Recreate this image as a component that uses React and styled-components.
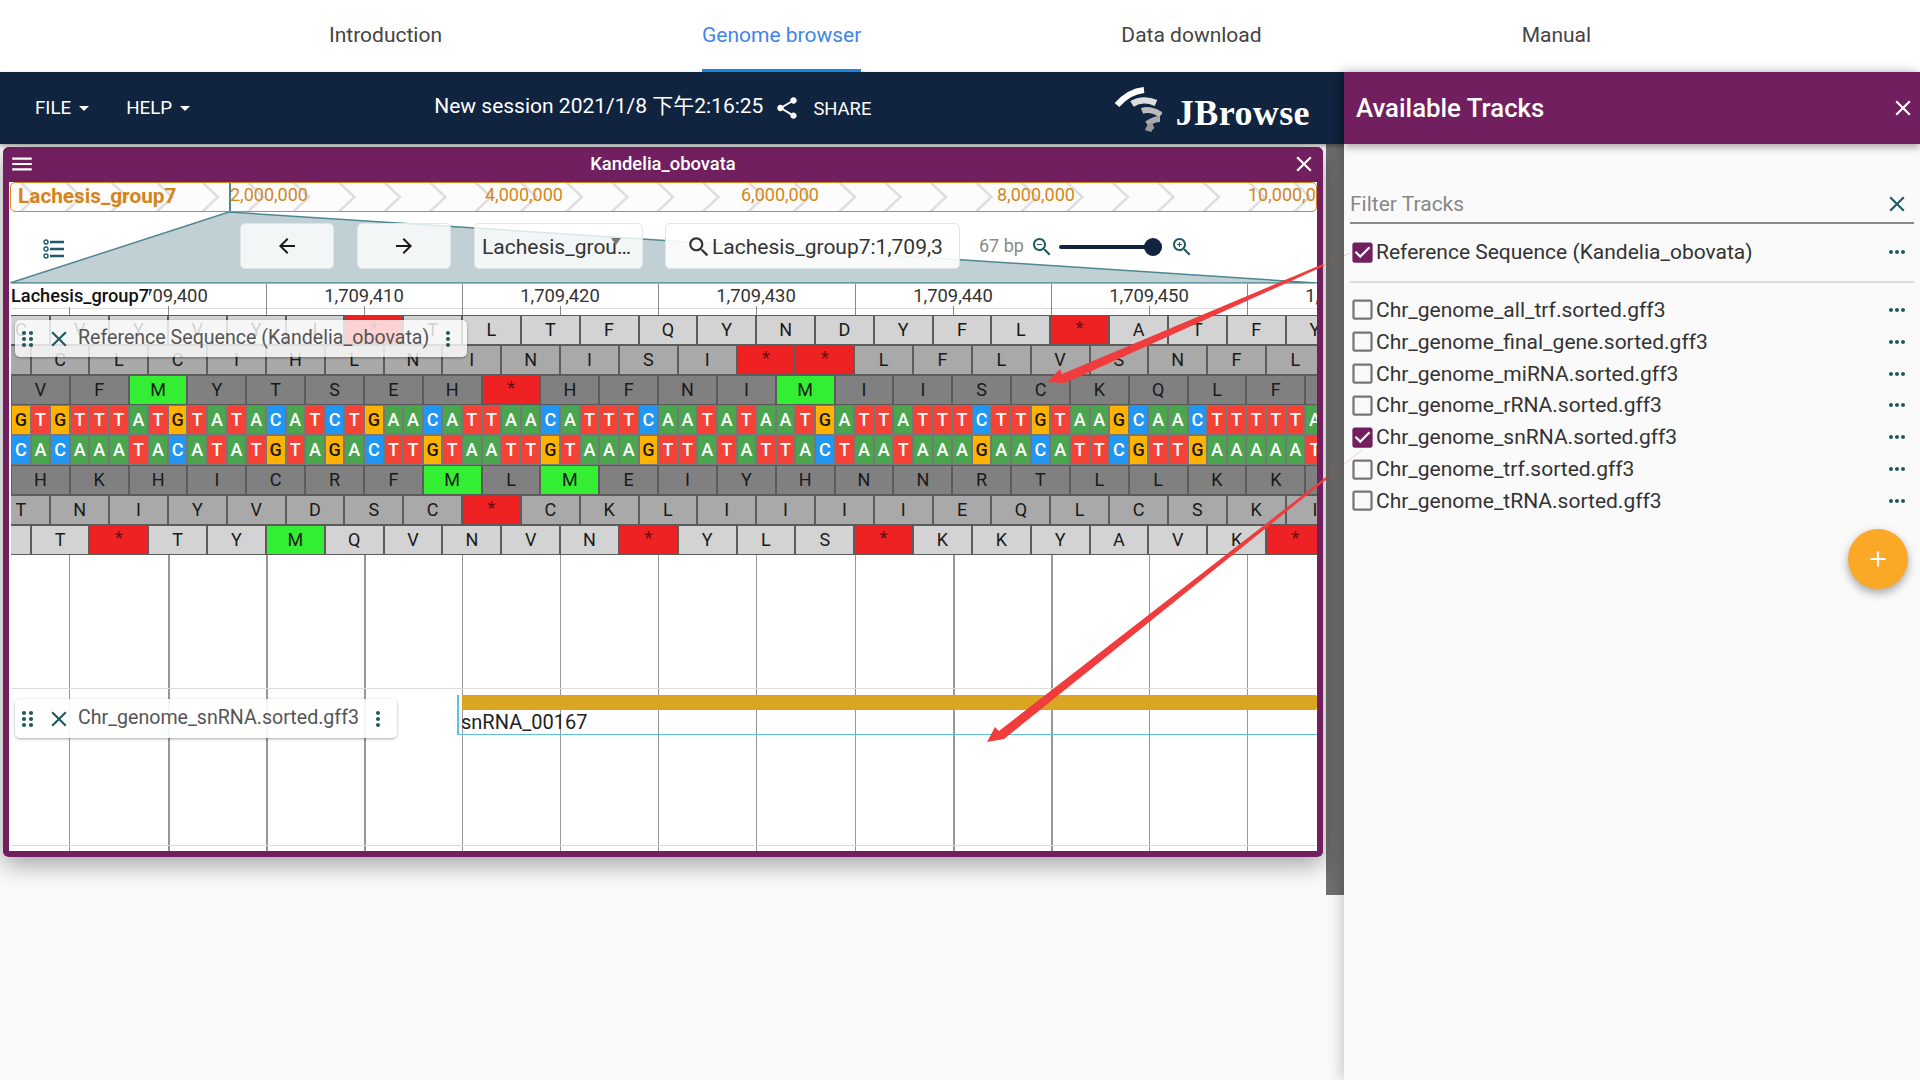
import React from "react";
import styled, { createGlobalStyle } from "styled-components";

const BASE = 19.61;
const TOP_STRAND =
  "GTGTTTATGTATACATCTGAACATTAACATTTCAATATAATGATTATTTCTTGTAAGCAACTTTTTA";
const BOTTOM_STRAND =
  "CACAAATACATATGTAGACTTGTAATTGTAAAGTTATATTACTAATAAAGAACATTCGTTGAAAAAT";

// shift = how many bases of the frame are visible before the 2nd codon
const FRAMES = [
  { shift: 2, tone: "#d3d3d3", aa: "CVYVYI*TLTFQYNDYFL*ATFY" },
  { shift: 1, tone: "#a9a9a9", aa: " CLCIHLNINISI**LFLVSNFL" },
  { shift: 0, tone: "#808080", aa: "VFMYTSEH*HFNIMIISCKQLFY" },
  { dna: TOP_STRAND },
  { dna: BOTTOM_STRAND },
  { shift: 0, tone: "#808080", aa: "HKHICRFMLMEIYHNNRTLLKKK" },
  { shift: 2, tone: "#a9a9a9", aa: "TNIYVDSC*CKLIIIIEQLCSKI" },
  { shift: 1, tone: "#d3d3d3", aa: " T*TYMQVNVN*YLS*KKYAVK*" },
];

const BASE_COLORS = { A: "#4aa54e", T: "#f44336", C: "#2196f3", G: "#ffb300" };

const GRID_LINES = [
  [69, 1], [168, 2], [266, 2], [364, 2], [462, 1], [560, 1], [658, 1],
  [756, 1], [855, 1], [953, 2], [1051, 2], [1149, 1], [1247, 1],
];
const RULER_LABELS = [
  [168, "1,709,400"], [364, "1,709,410"], [560, "1,709,420"], [756, "1,709,430"],
  [953, "1,709,440"], [1149, "1,709,450"], [1345, "1,709,460"],
];
const OVERVIEW_LABELS = [
  [229, "2,000,000"], [484, "4,000,000"], [740, "6,000,000"], [996, "8,000,000"], [1247, "10,000,000"],
];
const TRACKS = [
  ["Chr_genome_all_trf.sorted.gff3", false],
  ["Chr_genome_final_gene.sorted.gff3", false],
  ["Chr_genome_miRNA.sorted.gff3", false],
  ["Chr_genome_rRNA.sorted.gff3", false],
  ["Chr_genome_snRNA.sorted.gff3", true],
  ["Chr_genome_trf.sorted.gff3", false],
  ["Chr_genome_tRNA.sorted.gff3", false],
];

const PATHS = {
  close: "M19 6.41L17.59 5 12 10.59 6.41 5 5 6.41 10.59 12 5 17.59 6.41 19 12 13.41 17.59 19 19 17.59 13.41 12z",
  back: "M20 11H7.83l5.59-5.59L12 4l-8 8 8 8 1.41-1.41L7.83 13H20v-2z",
  forward: "M12 4l-1.41 1.41L16.17 11H4v2h12.17l-5.58 5.59L12 20l8-8z",
  vert: "M12 8c1.1 0 2-.9 2-2s-.9-2-2-2-2 .9-2 2 .9 2 2 2zm0 2c-1.1 0-2 .9-2 2s.9 2 2 2 2-.9 2-2-.9-2-2-2zm0 6c-1.1 0-2 .9-2 2s.9 2 2 2 2-.9 2-2-.9-2-2-2z",
  horiz: "M6 10c-1.1 0-2 .9-2 2s.9 2 2 2 2-.9 2-2-.9-2-2-2zm12 0c-1.1 0-2 .9-2 2s.9 2 2 2 2-.9 2-2-.9-2-2-2zm-6 0c-1.1 0-2 .9-2 2s.9 2 2 2 2-.9 2-2-.9-2-2-2z",
  menu: "M3 18h18v-2H3v2zm0-5h18v-2H3v2zm0-7v2h18V6H3z",
  share: "M18 16.08c-.76 0-1.44.3-1.96.77L8.91 12.7c.05-.23.09-.46.09-.7s-.04-.47-.09-.7l7.05-4.11c.54.5 1.25.81 2.04.81 1.66 0 3-1.34 3-3s-1.34-3-3-3-3 1.34-3 3c0 .24.04.47.09.7L8.04 9.81C7.5 9.31 6.79 9 6 9c-1.66 0-3 1.34-3 3s1.34 3 3 3c.79 0 1.5-.31 2.04-.81l7.12 4.16c-.05.21-.08.43-.08.65 0 1.61 1.31 2.92 2.92 2.92s2.92-1.31 2.92-2.92c0-1.61-1.31-2.92-2.92-2.92z",
  search: "M15.5 14h-.79l-.28-.27C15.41 12.59 16 11.11 16 9.5 16 5.91 13.09 3 9.5 3S3 5.91 3 9.5 5.91 16 9.5 16c1.61 0 3.09-.59 4.23-1.57l.27.28v.79l5 4.99L20.49 19l-4.99-5zm-6 0C7.01 14 5 11.99 5 9.5S7.01 5 9.5 5 14 7.01 14 9.5 11.99 14 9.5 14z",
  zoomIn: "M15.5 14h-.79l-.28-.27C15.41 12.59 16 11.11 16 9.5 16 5.91 13.09 3 9.5 3S3 5.91 3 9.5 5.91 16 9.5 16c1.61 0 3.09-.59 4.23-1.57l.27.28v.79l5 4.99L20.49 19l-4.99-5zm-6 0C7.01 14 5 11.99 5 9.5S7.01 5 9.5 5 14 7.01 14 9.5 11.99 14 9.5 14zM12 10h-2v2H9v-2H7V9h2V7h1v2h2v1z",
  zoomOut: "M15.5 14h-.79l-.28-.27C15.41 12.59 16 11.11 16 9.5 16 5.91 13.09 3 9.5 3S3 5.91 3 9.5 5.91 16 9.5 16c1.61 0 3.09-.59 4.23-1.57l.27.28v.79l5 4.99L20.49 19l-4.99-5zm-6 0C7.01 14 5 11.99 5 9.5S7.01 5 9.5 5 14 7.01 14 9.5 11.99 14 9.5 14zM7 9h5v1H7z",
  checked: "M19 3H5c-1.11 0-2 .9-2 2v14c0 1.1.89 2 2 2h14c1.11 0 2-.9 2-2V5c0-1.1-.89-2-2-2zm-9 14l-5-5 1.41-1.41L10 14.17l7.59-7.59L19 8l-9 9z",
  unchecked: "M19 5v14H5V5h14m0-2H5c-1.1 0-2 .9-2 2v14c0 1.1.9 2 2 2h14c1.1 0 2-.9 2-2V5c0-1.1-.9-2-2-2z",
  add: "M19 13h-6v6h-2v-6H5v-2h6V5h2v6h6v2z",
  drop: "M7 10l5 5 5-5z",
};

const GlobalStyle = createGlobalStyle`
  html, body {
    margin: 0;
    padding: 0;
    background: #fafafa;
  }
  body {
    font-family: Roboto, "Noto Sans CJK SC", sans-serif;
    overflow: hidden;
  }
  * {
    box-sizing: border-box;
  }
`;

const Page = styled.div`
  position: relative;
  width: 1920px;
  height: 1080px;
  overflow: hidden;
  background: #fafafa;
`;

const TopNav = styled.nav`
  display: flex;
  gap: 260px;
  height: 72px;
  padding-left: 329px;
  background: #fff;
`;
const NavTab = styled.a`
  display: flex;
  align-items: center;
  height: 72px;
  font-size: 21px;
  color: ${p => (p.$active ? "#4285e8" : "#444")};
  border-bottom: 3px solid ${p => (p.$active ? "#1e88e5" : "transparent")};
`;

const Main = styled.div`
  display: flex;
  height: 1008px;
`;
const LeftColumn = styled.div`
  flex: 0 0 1344px;
  display: flex;
  flex-direction: column;
`;
const AppBar = styled.header`
  display: flex;
  align-items: center;
  flex: 0 0 72px;
  padding-left: 35px;
  background: #10233f;
  color: #fff;
  box-shadow: 0 2px 4px rgba(0, 0, 0, 0.35);
  position: relative;
  z-index: 2;
`;
const MenuButton = styled.div`
  display: flex;
  align-items: center;
  margin-right: 30px;
  font-size: 18.75px;
  text-transform: uppercase;
  svg {
    margin-left: 1px;
  }
`;
const SessionName = styled.div`
  margin-left: 207px;
  margin-top: -8px;
  font-size: 21px;
  white-space: nowrap;
`;
const ShareButton = styled.div`
  display: flex;
  align-items: center;
  gap: 13px;
  margin-left: 11px;
  font-size: 18.4px;
`;
const Logo = styled.div`
  display: flex;
  align-items: center;
  margin-left: auto;
  margin-right: 34px;
  gap: 14px;
`;
const LogoText = styled.span`
  font-family: "Liberation Serif", serif;
  font-weight: 700;
  font-size: 36px;
  letter-spacing: 0.4px;
  line-height: 40px;
  margin-top: 10px;
  color: #fff;
`;
const LogoMark = styled.svg`
  margin-top: 5px;
`;

const Workspace = styled.div`
  display: flex;
  justify-content: space-between;
  flex: 1;
`;
const ScrollTrack = styled.div`
  width: 18px;
  height: 751px;
  background: #6f6f6f;
`;

const ViewWindow = styled.section`
  position: relative;
  display: flex;
  flex-direction: column;
  width: 1320px;
  height: 710px;
  margin: 3px 0 0 3px;
  border: 6px solid #711f5f;
  border-top: none;
  border-radius: 6px;
  background: #fff;
  box-shadow: 0 8px 24px rgba(0, 0, 0, 0.35);
`;
const WindowHeader = styled.div`
  display: flex;
  align-items: center;
  justify-content: space-between;
  flex: 0 0 35px;
  margin: 0 -6px;
  padding: 0 6px 2px 6px;
  background: #711f5f;
  border-radius: 6px 6px 0 0;
  color: #fff;
`;
const WindowTitle = styled.div`
  font-size: 18.4px;
  font-weight: 500;
`;

const Overview = styled.div`
  position: relative;
  flex: 0 0 30px;
  margin-left: 1px;
  border: 1px solid #d4861c;
  border-radius: 5px;
  background: #fcfcfc;
  overflow: hidden;
`;
const ChevronLayer = styled.svg`
  position: absolute;
  inset: 0;
`;
const OverviewLabel = styled.span`
  position: absolute;
  top: 1px;
  font-size: 18px;
  color: #d4861c;
  white-space: nowrap;
`;
const OverviewRef = styled.span`
  position: absolute;
  left: 7px;
  top: -1px;
  font-size: 20.8px;
  font-weight: 700;
  color: #d4861c;
  line-height: 28px;
`;
const OverviewCursor = styled.div`
  position: absolute;
  left: 218px;
  top: 0;
  bottom: 0;
  width: 2px;
  background: #4f8791;
`;

const ControlRow = styled.div`
  position: relative;
  display: flex;
  align-items: flex-start;
  flex: 0 0 71px;
  padding-top: 11px;
`;
const ZoomPolygon = styled.svg`
  position: absolute;
  left: 0;
  top: 0;
`;
const ListIcon = styled.svg`
  position: relative;
  margin: 16px 0 0 34px;
`;
const NavButton = styled.div`
  position: relative;
  display: flex;
  align-items: center;
  justify-content: center;
  flex: 0 0 94px;
  height: 46px;
  margin-left: ${p => p.$gap}px;
  background: rgba(255, 255, 255, 0.8);
  border: 1px solid #e0e4e6;
  border-radius: 5px;
  color: #1a1a1a;
`;
const SelectBox = styled(NavButton)`
  flex: 0 0 169px;
  justify-content: flex-start;
  padding: 1px 0 0 7px;
  font-size: 21px;
  color: #333;
  white-space: nowrap;
  overflow: hidden;
`;
const SelectCaret = styled.svg`
  position: absolute;
  right: 19px;
  top: 14px;
`;
const SearchBox = styled(NavButton)`
  flex: 0 0 295px;
  justify-content: flex-start;
  padding: 1px 0 0 20px;
  font-size: 21px;
  color: #333;
  background: rgba(255, 255, 255, 0.9);
  white-space: nowrap;
  overflow: hidden;
`;
const BpLabel = styled.span`
  position: relative;
  margin: 12px 0 0 19px;
  font-size: 18px;
  color: #8a8a8a;
`;
const ZoomIcon = styled.div`
  position: relative;
  display: flex;
  margin: 12px 0 0 ${p => p.$gap}px;
  color: #1f5a5f;
`;
const Slider = styled.div`
  position: relative;
  flex: 0 0 103px;
  height: 4px;
  margin: 22px 0 0 5px;
  background: #10233f;
  border-radius: 2px;
`;
const SliderThumb = styled.div`
  position: absolute;
  left: 85px;
  top: -7px;
  width: 18px;
  height: 18px;
  border-radius: 50%;
  background: #10233f;
`;

const Ruler = styled.div`
  position: relative;
  flex: 0 0 32px;
  margin-left: 2px;
  background: #fff;
  overflow: hidden;
  border-top: 1px solid #9fb4ba;
`;
const RulerRule = styled.div`
  position: absolute;
  left: 0;
  right: 0;
  top: 24px;
  height: 1px;
  background: #ddd;
`;
const RulerTick = styled.div`
  position: absolute;
  bottom: 0;
  width: 1px;
  height: ${p => (p.$major ? 32 : 9)}px;
  background: #888;
`;
const RulerNumber = styled.span`
  position: absolute;
  top: 1px;
  transform: translateX(-50%);
  font-size: 18.4px;
  line-height: 22px;
  color: #333;
  white-space: nowrap;
`;
const RefName = styled.span`
  position: absolute;
  left: 0;
  top: 1px;
  font-size: 18.2px;
  font-weight: 500;
  line-height: 22px;
  color: #111;
  background: #fff;
`;

const TrackArea = styled.div`
  position: relative;
  flex: 1;
  overflow: hidden;
`;
const GridLine = styled.div`
  position: absolute;
  top: 0;
  bottom: 0;
  width: ${p => p.$width}px;
  background: #979797;
`;
const TrackRule = styled.div`
  position: absolute;
  left: 2px;
  right: 0;
  top: ${p => p.$top}px;
  height: 1px;
  background: #ddd;
`;
const SequenceBlock = styled.div`
  position: relative;
  margin-left: 2px;
  height: 240px;
  overflow: hidden;
`;
const StrandRow = styled.div`
  display: flex;
  height: 30px;
  margin-left: ${p => p.$offset || 0}px;
`;
const Cell = styled.div`
  display: flex;
  align-items: center;
  justify-content: center;
  flex: 0 0 ${p => p.$width}px;
  height: 30px;
  border: 1px solid ${p => (p.$dna ? "#777" : "#5c5c5c")};
  font-size: 18px;
  line-height: 1;
  background: ${p => p.$bg};
  color: ${p => p.$fg || "#1a1a1a"};
  font-weight: ${p => p.$weight || 400};
`;
const Star = styled.span`
  font-size: 18px;
  color: #6d0c0c;
  transform: translateY(-2px);
`;

const TrackLabel = styled.div`
  position: absolute;
  left: 6px;
  top: ${p => p.$top}px;
  display: flex;
  align-items: center;
  height: ${p => p.$height}px;
  padding: 0 7px 0 1px;
  background: ${p => p.$bg};
  border-radius: 5px;
  box-shadow: 0 1px 3px rgba(0, 0, 0, 0.35);
  font-size: 19.6px;
  color: #555;
  white-space: nowrap;
  svg {
    flex: none;
  }
`;
const LabelClose = styled.div`
  display: flex;
  margin-left: 6px;
`;
const LabelText = styled.span`
  margin: -2px 7px 0 6px;
`;

const FeatureLane = styled.div`
  position: absolute;
  left: 448px;
  right: 0;
  top: 380px;
  height: 40px;
  border-left: 2px solid #5fc0e0;
  border-bottom: 1px solid #5fc0e0;
`;
const FeatureBar = styled.div`
  height: 15px;
  margin-left: 3px;
  background: #daa520;
  border-radius: 0 2px 2px 0;
`;
const FeatureName = styled.div`
  margin: 0 0 0 2px;
  font-size: 20px;
  line-height: 24px;
  color: #222;
`;

const Drawer = styled.aside`
  position: relative;
  flex: 0 0 576px;
  display: flex;
  flex-direction: column;
  background: #fafafa;
  box-shadow: -4px 0 12px rgba(0, 0, 0, 0.18);
  z-index: 3;
`;
const DrawerHeader = styled.div`
  display: flex;
  align-items: center;
  justify-content: space-between;
  flex: 0 0 72px;
  padding: 0 4px 0 12px;
  background: #711f5f;
  color: #fff;
  box-shadow: 0 3px 8px rgba(0, 0, 0, 0.35);
`;
const DrawerTitle = styled.h2`
  margin: 0;
  font-size: 25.8px;
  font-weight: 500;
`;
const DrawerBody = styled.div`
  position: relative;
  flex: 1;
  padding: 36px 6px 0 6px;
`;
const FilterField = styled.div`
  display: flex;
  align-items: center;
  justify-content: space-between;
  height: 44px;
  padding: 5px 4px 0 0;
  border-bottom: 2px solid #8a8a8a;
  font-size: 21px;
  color: #888;
`;
const TrackRow = styled.div`
  display: flex;
  align-items: center;
  height: ${p => p.$height || 31.85}px;
  font-size: 21px;
  color: #333;
  white-space: nowrap;
`;
const RefTrackRow = styled(TrackRow)`
  margin-bottom: -13px;
`;
const TrackName = styled.span`
  flex: 1;
`;
const CheckIcon = styled.svg`
  flex: none;
  margin-left: -1px;
  color: ${p => (p.$on ? "#711f5f" : "#777")};
`;
const MoreIcon = styled.svg`
  flex: none;
  margin-right: 5px;
  color: #1f5a5f;
`;
const DrawerDivider = styled.div`
  height: 2px;
  margin: 14px 0 11px;
  background: #ddd;
`;
const Fab = styled.div`
  position: absolute;
  right: 12px;
  top: 385px;
  display: flex;
  align-items: center;
  justify-content: center;
  width: 60px;
  height: 60px;
  border-radius: 50%;
  background: #fba827;
  color: #fff;
  box-shadow: 0 4px 10px rgba(0, 0, 0, 0.35);
`;

const ArrowOverlay = styled.svg`
  position: absolute;
  left: 0;
  top: 0;
  z-index: 5;
  pointer-events: none;
`;

const Icon = ({ name, size = 24, color = "currentColor" }) => (
  <svg width={size} height={size} viewBox="0 0 24 24" fill={color}>
    <path d={PATHS[name]} />
  </svg>
);

const DragDots = () => (
  <svg width="24" height="24" viewBox="0 0 24 24" fill="#1f5a5f">
    {[8, 15].map(x =>
      [6, 12, 18].map(y => <circle key={x + "-" + y} cx={x} cy={y} r="2.1" />)
    )}
  </svg>
);

const JBrowseMark = () => (
  <LogoMark width="48" height="50" viewBox="0 0 48 50" fill="none">
    <path d="M3 19 C10 11 20 5 30 4" stroke="#fff" strokeWidth="6" />
    <path d="M18 18 C24 14 33 13 42 17" stroke="#ddd" strokeWidth="6.5" />
    <path d="M28 25 C33 23 41 24 47 29" stroke="#bbb" strokeWidth="6" />
    <path d="M33 38 C37 35 41 33 46 33" stroke="#aaa" strokeWidth="6" />
    <path d="M34 45 C35 42 37 40 39 39" stroke="#999" strokeWidth="6.5" />
  </LogoMark>
);

const ReadingFrame = ({ frame }) => (
  <StrandRow $offset={frame.shift ? (frame.shift - 3) * BASE : 0}>
    {[...frame.aa].map((aa, i) => {
      let bg = frame.tone;
      if (aa === "*") bg = "#ee2222";
      if (aa === "M") bg = "#33ee33";
      return (
        <Cell key={i} $width={BASE * 3} $bg={bg}>
          {aa === "*" ? <Star>*</Star> : aa}
        </Cell>
      );
    })}
  </StrandRow>
);

const Strand = ({ bases }) => (
  <StrandRow>
    {[...bases].map((b, i) => (
      <Cell
        key={i}
        $dna
        $width={BASE}
        $bg={BASE_COLORS[b]}
        $fg={b === "G" ? "#1a1a1a" : "#fff"}
        $weight={500}
      >
        {b}
      </Cell>
    ))}
  </StrandRow>
);

const Chevrons = () => {
  const xs = [];
  for (let tip = 25; tip < 1340; tip += 45.5) xs.push(tip - 16);
  return (
    <ChevronLayer width="1307" height="28">
      {xs.map(x => (
        <path
          key={x}
          d={`M${x} -1 L${x + 16} 14 L${x} 29`}
          stroke="#dedede"
          strokeWidth="2.5"
          fill="none"
        />
      ))}
    </ChevronLayer>
  );
};

export default function App() {
  return (
    <Page>
      <GlobalStyle />
      <TopNav>
        <NavTab>Introduction</NavTab>
        <NavTab $active>Genome browser</NavTab>
        <NavTab>Data download</NavTab>
        <NavTab>Manual</NavTab>
      </TopNav>
      <Main>
        <LeftColumn>
          <AppBar>
            <MenuButton>
              File
              <Icon name="drop" size={24} />
            </MenuButton>
            <MenuButton>
              Help
              <Icon name="drop" size={24} />
            </MenuButton>
            <SessionName>New session 2021/1/8 下午2:16:25</SessionName>
            <ShareButton>
              <Icon name="share" size={26} />
              SHARE
            </ShareButton>
            <Logo>
              <JBrowseMark />
              <LogoText>JBrowse</LogoText>
            </Logo>
          </AppBar>
          <Workspace>
            <ViewWindow>
              <WindowHeader>
                <Icon name="menu" size={26} />
                <WindowTitle>Kandelia_obovata</WindowTitle>
                <Icon name="close" size={26} />
              </WindowHeader>
              <Overview>
                <Chevrons />
                <OverviewRef>Lachesis_group7</OverviewRef>
                <OverviewCursor />
                {OVERVIEW_LABELS.map(([x, text]) => (
                  <OverviewLabel key={text} style={{ left: x - 10 }}>
                    {text}
                  </OverviewLabel>
                ))}
              </Overview>
              <ControlRow>
                <ZoomPolygon width="1308" height="71">
                  <polygon
                    points="220,0 1,71 1308,71"
                    fill="#c1d0d5"
                    stroke="#4f8791"
                    strokeWidth="1.5"
                  />
                </ZoomPolygon>
                <ListIcon width="22" height="20" viewBox="0 0 22 20" fill="none" stroke="#1f5a70">
                  <circle cx="3" cy="3" r="2" strokeWidth="1.4" />
                  <circle cx="3" cy="10" r="2" strokeWidth="1.4" />
                  <circle cx="3" cy="17" r="2" strokeWidth="1.4" />
                  <path d="M7 3H21M7 10H21M7 17H21" strokeWidth="2.4" />
                </ListIcon>
                <NavButton $gap={175}>
                  <Icon name="back" />
                </NavButton>
                <NavButton $gap={23}>
                  <Icon name="forward" />
                </NavButton>
                <SelectBox $gap={23}>
                  Lachesis_grou…
                  <SelectCaret width="14" height="8" viewBox="0 0 14 8">
                    <path d="M2 0H12L7 7Z" fill="#777" />
                  </SelectCaret>
                </SelectBox>
                <SearchBox $gap={22}>
                  <Icon name="search" size={26} />
                  Lachesis_group7:1,709,3
                </SearchBox>
                <BpLabel>67 bp</BpLabel>
                <ZoomIcon $gap={6}>
                  <Icon name="zoomOut" />
                </ZoomIcon>
                <Slider>
                  <SliderThumb />
                </Slider>
                <ZoomIcon $gap={8}>
                  <Icon name="zoomIn" />
                </ZoomIcon>
              </ControlRow>
              <Ruler>
                <RulerRule />
                {GRID_LINES.map(([x], i) => (
                  <RulerTick key={x} $major={i > 0 && i % 2 === 0} style={{ left: x - 11 }} />
                ))}
                {RULER_LABELS.map(([x, text]) => (
                  <RulerNumber key={text} style={{ left: x - 11 }}>
                    {text}
                  </RulerNumber>
                ))}
                <RefName>Lachesis_group7</RefName>
              </Ruler>
              <TrackArea>
                {GRID_LINES.map(([x, width]) => (
                  <GridLine key={x} $width={width} style={{ left: x - 9 }} />
                ))}
                <TrackRule $top={373} />
                <TrackRule $top={530} />
                <SequenceBlock>
                  {FRAMES.map((frame, i) =>
                    frame.dna ? (
                      <Strand key={i} bases={frame.dna} />
                    ) : (
                      <ReadingFrame key={i} frame={frame} />
                    )
                  )}
                </SequenceBlock>
                <FeatureLane>
                  <FeatureBar />
                  <FeatureName>snRNA_00167</FeatureName>
                </FeatureLane>
                <TrackLabel $top={5} $height={37} $bg="rgba(255,255,255,0.8)">
                  <DragDots />
                  <LabelClose>
                    <Icon name="close" size={26} color="#1f5a5f" />
                  </LabelClose>
                  <LabelText>Reference Sequence (Kandelia_obovata)</LabelText>
                  <Icon name="vert" size={24} color="#1f5a5f" />
                </TrackLabel>
                <TrackLabel $top={384} $height={39} $bg="rgba(255,255,255,0.9)">
                  <DragDots />
                  <LabelClose>
                    <Icon name="close" size={26} color="#1f5a5f" />
                  </LabelClose>
                  <LabelText>Chr_genome_snRNA.sorted.gff3</LabelText>
                  <Icon name="vert" size={24} color="#1f5a5f" />
                </TrackLabel>
              </TrackArea>
            </ViewWindow>
            <ScrollTrack />
          </Workspace>
        </LeftColumn>
        <Drawer>
          <DrawerHeader>
            <DrawerTitle>Available Tracks</DrawerTitle>
            <Icon name="close" size={26} />
          </DrawerHeader>
          <DrawerBody>
            <FilterField>
              Filter Tracks
              <Icon name="close" size={26} color="#1f5a5f" />
            </FilterField>
            <RefTrackRow $height={56}>
              <CheckIcon $on width="27" height="27" viewBox="0 0 24 24" fill="currentColor">
                <path d={PATHS.checked} />
              </CheckIcon>
              <TrackName>Reference Sequence (Kandelia_obovata)</TrackName>
              <MoreIcon width="24" height="24" viewBox="0 0 24 24" fill="currentColor">
                <path d={PATHS.horiz} />
              </MoreIcon>
            </RefTrackRow>
            <DrawerDivider />
            {TRACKS.map(([name, on]) => (
              <TrackRow key={name}>
                <CheckIcon $on={on} width="27" height="27" viewBox="0 0 24 24" fill="currentColor">
                  <path d={on ? PATHS.checked : PATHS.unchecked} />
                </CheckIcon>
                <TrackName>{name}</TrackName>
                <MoreIcon width="24" height="24" viewBox="0 0 24 24" fill="currentColor">
                  <path d={PATHS.horiz} />
                </MoreIcon>
              </TrackRow>
            ))}
            <Fab>
              <Icon name="add" size={26} />
            </Fab>
          </DrawerBody>
        </Drawer>
      </Main>
      <ArrowOverlay width="1920" height="1080">
        <polygon points="1323,264 1324,266 1065,383 1047,382 1060,369 1062,374" fill="#f03c3c" />
        <path d="M1324 265 L1350 253" stroke="#f03c3c" strokeWidth="1" opacity="0.25" />
        <polygon points="1326,477 1327,479 1004,739 987,742 995,727 999,731" fill="#f03c3c" />
        <path d="M1327 478 L1362 450" stroke="#f03c3c" strokeWidth="1" opacity="0.25" />
      </ArrowOverlay>
    </Page>
  );
}
